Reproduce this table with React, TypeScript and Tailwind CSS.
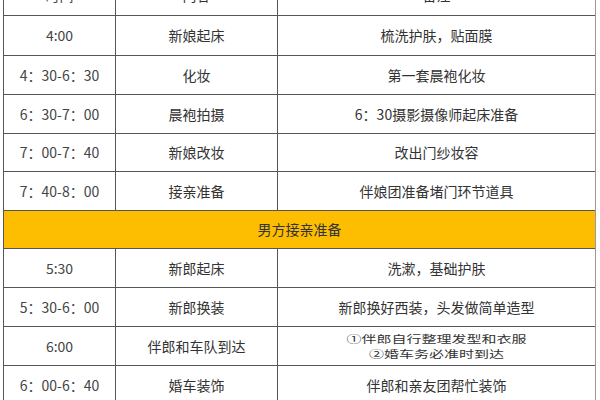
const rows: { time: string; item: string; note: string[]; h: string }[] = [
  { time: "4:00", item: "新娘起床", note: ["梳洗护肤，贴面膜"], h: "h-[40px]" },
  { time: "4：30-6：30", item: "化妆", note: ["第一套晨袍化妆"], h: "h-[39px]" },
  { time: "6：30-7：00", item: "晨袍拍摄", note: ["6：30摄影摄像师起床准备"], h: "h-[39px]" },
  { time: "7：00-7：40", item: "新娘改妆", note: ["改出门纱妆容"], h: "h-[38px]" },
  { time: "7：40-8：00", item: "接亲准备", note: ["伴娘团准备堵门环节道具"], h: "h-[39px]" },
];

const groomRows: { time: string; item: string; note: string[]; h: string }[] = [
  { time: "5:30", item: "新郎起床", note: ["洗漱，基础护肤"], h: "h-[39px]" },
  { time: "5：30-6：00", item: "新郎换装", note: ["新郎换好西装，头发做简单造型"], h: "h-[39px]" },
  { time: "6:00", item: "伴郎和车队到达", note: ["①伴郎自行整理发型和衣服", "②婚车务必准时到达"], h: "h-[39px]" },
  { time: "6：00-6：40", item: "婚车装饰", note: ["伴郎和亲友团帮忙装饰"], h: "h-[39px]" },
];

function Row({ time, item, note, h }: { time: string; item: string; note: string[]; h: string }) {
  return (
    <div className={`flex ${h} border-b border-[#555]`}>
      <div className="w-[112px] border-r border-[#555] flex items-center justify-center text-[#444]">
        {time}
      </div>
      <div className="w-[162px] border-r border-[#555] flex items-center justify-center">
        {item}
      </div>
      <div className="flex-1 flex items-center justify-center">
        {note.length > 1 ? (
          // two-line note: squeezed vertically like the original scan
          <div className="flex flex-col items-center text-[15px] leading-[22px] scale-y-[0.7]">
            {note.map((n) => (
              <span key={n}>{n}</span>
            ))}
          </div>
        ) : (
          <span>{note[0]}</span>
        )}
      </div>
    </div>
  );
}

export default function App() {
  return (
    <div className="w-[600px] h-[400px] overflow-hidden bg-white">
      <div
        className="ml-[3px] w-[593px] -mt-[24px] border-l border-r border-l-[#555] border-r-[#999] text-[14px] text-[#333]"
        style={{ fontFamily: '"Noto Sans CJK SC", "Noto Sans", sans-serif' }}
      >
        <Row time="时间" item="内容" note={["备注"]} h="h-[40px]" />
        {rows.map((r) => (
          <Row key={r.time} {...r} />
        ))}
        <div className="h-[38px] border-b border-[#555] bg-[#fdbd00] flex items-center justify-center">
          男方接亲准备
        </div>
        {groomRows.map((r) => (
          <Row key={r.time} {...r} />
        ))}
      </div>
    </div>
  );
}
